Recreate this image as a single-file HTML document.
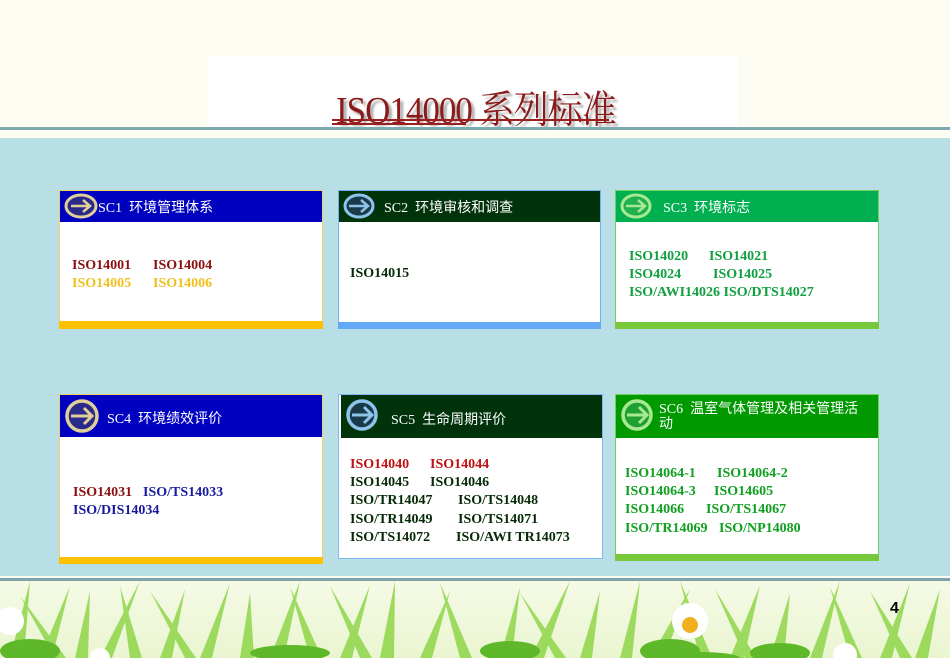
<!DOCTYPE html>
<html><head><meta charset="utf-8"><style>
*{margin:0;padding:0;box-sizing:border-box}
body{width:950px;height:658px;position:relative;overflow:hidden;background:#fdfdf3;font-family:"Liberation Serif","Noto Serif CJK SC",serif}
.a{position:absolute}
.box{position:absolute;background:#fff;border:1px solid}
.hd{position:absolute;left:0;top:0;right:0;color:#fff;font-size:14px;font-family:"Liberation Serif","Noto Sans CJK SC",serif}
.bar{position:absolute;left:-1px;right:-1px;bottom:-1px}
.tx{position:absolute;font-weight:bold;font-size:14px;line-height:18.2px;white-space:nowrap}
.tx div{position:relative;height:18.2px}
.tx span{position:absolute;top:0}
.ic{position:absolute}
</style></head><body>
<div class="a" style="left:208px;top:56px;width:530px;height:72px;background:#fff"></div>
<div class="a" style="left:336px;top:80px;font-size:35px;color:#8b1a1a;font-family:'Liberation Serif','Noto Serif CJK SC',serif;text-shadow:3px 3px 2px #aaa;letter-spacing:-1px;transform:scaleY(1.1);transform-origin:top left;white-space:nowrap">ISO14000 系列标准</div>
<div class="a" style="left:332px;top:119px;width:277px;height:2px;background:#9b1f1f"></div>
<div class="a" style="left:332px;top:123px;width:134px;height:2px;background:#9b1f1f"></div>
<div class="a" style="left:0;top:127px;width:950px;height:3px;background:#7fa9b1"></div>
<div class="a" style="left:0;top:138px;width:950px;height:438px;background:#b8dfe6"></div>
<div class="a" style="left:0;top:578px;width:950px;height:3px;background:#7fa3ab"></div>
<div class="a" style="left:0;top:581px;width:950px;height:77px;background:linear-gradient(#f5fae6,#eaf5d0)"></div>
<svg class="a" style="left:0;top:581px" width="950" height="77" viewBox="0 0 950 77">
<g fill="#8fd64a" opacity="0.85">
<polygon points="10,77 30,0 24,77"/><polygon points="40,77 70,5 52,77"/><polygon points="75,77 90,10 88,77"/><polygon points="100,77 140,0 112,77"/><polygon points="130,77 120,5 142,77"/><polygon points="160,77 185,8 172,77"/><polygon points="200,77 230,2 212,77"/><polygon points="240,77 250,12 254,77"/><polygon points="270,77 300,0 284,77"/><polygon points="310,77 290,6 322,77"/><polygon points="340,77 370,4 352,77"/><polygon points="380,77 395,0 394,77"/><polygon points="420,77 450,10 432,77"/><polygon points="460,77 440,2 472,77"/><polygon points="500,77 520,6 512,77"/><polygon points="530,77 570,0 544,77"/><polygon points="580,77 600,10 592,77"/><polygon points="620,77 640,0 632,77"/><polygon points="650,77 690,8 664,77"/><polygon points="700,77 680,0 712,77"/><polygon points="730,77 760,4 744,77"/><polygon points="770,77 790,12 784,77"/><polygon points="810,77 840,0 822,77"/><polygon points="850,77 830,6 862,77"/><polygon points="880,77 910,2 892,77"/><polygon points="915,77 940,8 928,77"/>
<polygon points="55,77 20,15 66,77"/><polygon points="185,77 150,10 196,77"/><polygon points="360,77 330,5 372,77"/><polygon points="555,77 520,12 566,77"/><polygon points="745,77 715,8 756,77"/><polygon points="900,77 870,10 912,77"/>
</g>
<g fill="#5fb82a"><ellipse cx="30" cy="70" rx="30" ry="12"/><ellipse cx="290" cy="72" rx="40" ry="8"/><ellipse cx="510" cy="70" rx="30" ry="10"/><ellipse cx="670" cy="70" rx="30" ry="12"/><ellipse cx="780" cy="72" rx="30" ry="10"/><ellipse cx="700" cy="77" rx="40" ry="6"/></g>
<g fill="#fff"><circle cx="10" cy="40" r="14"/><circle cx="100" cy="77" r="10"/><circle cx="690" cy="40" r="18"/><circle cx="845" cy="74" r="12"/></g>
<circle cx="690" cy="44" r="8" fill="#f0b020"/>
</svg>
<div class="a" style="left:890px;top:600px;font-size:16px;font-weight:bold;color:#000;font-family:'Liberation Sans',sans-serif">4</div>

<!-- SC1 -->
<div class="box" style="left:59px;top:190px;width:264px;height:139px;border-color:#f0d060">
<div class="hd" style="height:31px;background:#0000c0"><span style="position:absolute;left:38px;top:6px">SC1&nbsp; 环境管理体系</span></div>
<div class="bar" style="height:8px;background:#ffc000"></div>
<div class="tx" style="left:12px;top:66px;width:240px">
<div><span style="left:0;color:#8b1010">ISO14001</span><span style="left:81px;color:#8b1010">ISO14004</span></div>
<div><span style="left:0;color:#f0c020">ISO14005</span><span style="left:81px;color:#f0c020">ISO14006</span></div>
</div>
</div>
<svg class="ic" style="left:63px;top:193px" width="36" height="26"><ellipse cx="18" cy="13" rx="15" ry="11" fill="#2a2a8a" stroke="#e0d098" stroke-width="3"/><path d="M8 13H27M20 7l7 6-7 6" stroke="#e0d098" stroke-width="2.5" fill="none"/></svg>

<!-- SC2 -->
<div class="box" style="left:338px;top:190px;width:263px;height:139px;border-color:#70aef5">
<div class="hd" style="height:31px;background:#00330a"><span style="position:absolute;left:45px;top:6px">SC2&nbsp; 环境审核和调查</span></div>
<div class="bar" style="height:7px;background:#65a8f5"></div>
<div class="tx" style="left:11px;top:74px;color:#062a06">ISO14015</div>
</div>
<svg class="ic" style="left:342px;top:193px" width="34" height="26"><ellipse cx="17" cy="13" rx="14" ry="11" fill="#1a3a4a" stroke="#8ec4ec" stroke-width="3"/><path d="M7 13H26M19 7l7 6-7 6" stroke="#8ec4ec" stroke-width="2.5" fill="none"/></svg>

<!-- SC3 -->
<div class="box" style="left:615px;top:190px;width:264px;height:139px;border-color:#70d060">
<div class="hd" style="height:31px;background:#00b050"><span style="position:absolute;left:47px;top:6px">SC3&nbsp; 环境标志</span></div>
<div class="bar" style="height:7px;background:#78c83c"></div>
<div class="tx" style="left:13px;top:57px;color:#10a040;width:245px">
<div><span style="left:0">ISO14020</span><span style="left:80px">ISO14021</span></div>
<div><span style="left:0">ISO4024</span><span style="left:84px">ISO14025</span></div>
<div><span style="left:0">ISO/AWI14026 ISO/DTS14027</span></div>
</div>
</div>
<svg class="ic" style="left:619px;top:193px" width="34" height="26"><ellipse cx="17" cy="13" rx="14" ry="11" fill="#20b050" stroke="#a8e890" stroke-width="3"/><path d="M7 13H26M19 7l7 6-7 6" stroke="#a8e890" stroke-width="2.5" fill="none"/></svg>

<!-- SC4 -->
<div class="box" style="left:59px;top:394px;width:264px;height:170px;border-color:#f0d060">
<div class="hd" style="height:42px;background:#0000c0"><span style="position:absolute;left:47px;top:13px">SC4&nbsp; 环境绩效评价</span></div>
<div class="bar" style="height:7px;background:#ffc000"></div>
<div class="tx" style="left:13px;top:89px;color:#1a1aa0;width:240px">
<div><span style="left:0;color:#8b1010">ISO14031</span><span style="left:70px">ISO/TS14033</span></div>
<div><span style="left:0">ISO/DIS14034</span></div>
</div>
</div>
<svg class="ic" style="left:63px;top:399px" width="38" height="34"><circle cx="19" cy="17" r="15" fill="#2a2a8a" stroke="#e0d098" stroke-width="3.5"/><path d="M8 17H29M21 9l8 8-8 8" stroke="#e0d098" stroke-width="3" fill="none"/></svg>

<!-- SC5 -->
<div class="box" style="left:338px;top:394px;width:265px;height:165px;border-color:#80b8f0">
<div class="hd" style="height:43px;background:#00330a;left:2px"><span style="position:absolute;left:50px;top:14px">SC5&nbsp; 生命周期评价</span></div>
<div class="tx" style="left:11px;top:61px;color:#062a06;width:250px">
<div><span style="left:0;color:#c01010">ISO14040</span><span style="left:80px;color:#c01010">ISO14044</span></div>
<div><span style="left:0">ISO14045</span><span style="left:80px">ISO14046</span></div>
<div><span style="left:0">ISO/TR14047</span><span style="left:108px">ISO/TS14048</span></div>
<div><span style="left:0">ISO/TR14049</span><span style="left:108px">ISO/TS14071</span></div>
<div><span style="left:0">ISO/TS14072</span><span style="left:106px">ISO/AWI TR14073</span></div>
</div>
</div>
<svg class="ic" style="left:344px;top:398px" width="36" height="34"><circle cx="18" cy="17" r="14" fill="#1a3a4a" stroke="#8ec4ec" stroke-width="3.5"/><path d="M8 17H28M20 9l8 8-8 8" stroke="#8ec4ec" stroke-width="3" fill="none"/></svg>

<!-- SC6 -->
<div class="box" style="left:615px;top:394px;width:264px;height:167px;border-color:#70d060">
<div class="hd" style="height:43px;background:#009a00"><span style="position:absolute;left:43px;top:7px;line-height:15px">SC6&nbsp; 温室气体管理及相关管理活<br>动</span></div>
<div class="bar" style="height:7px;background:#78c83c"></div>
<div class="tx" style="left:9px;top:70px;color:#10a020;width:250px">
<div><span style="left:0">ISO14064-1</span><span style="left:92px">ISO14064-2</span></div>
<div><span style="left:0">ISO14064-3</span><span style="left:89px">ISO14605</span></div>
<div><span style="left:0">ISO14066</span><span style="left:81px">ISO/TS14067</span></div>
<div><span style="left:0">ISO/TR14069</span><span style="left:94px">ISO/NP14080</span></div>
</div>
</div>
<svg class="ic" style="left:619px;top:398px" width="36" height="34"><circle cx="18" cy="17" r="14" fill="#20a030" stroke="#a8e890" stroke-width="3.5"/><path d="M8 17H28M20 9l8 8-8 8" stroke="#a8e890" stroke-width="3" fill="none"/></svg>
</body></html>
